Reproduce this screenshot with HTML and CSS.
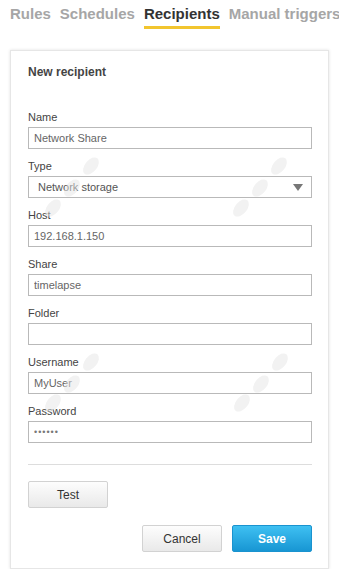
FILE: index.html
```html
<!DOCTYPE html>
<html lang="en">
<head>
    <meta charset="UTF-8">
    <meta name="viewport" content="width=device-width, initial-scale=1.0">
    <title>Recipients</title>
    <link rel="stylesheet" href="styles.css">
</head>
<body>
    <!-- Tabs -->
    <nav class="tabs">
        <a class="tab">Rules</a>
        <a class="tab">Schedules</a>
        <a class="tab active">Recipients</a>
        <a class="tab">Manual triggers</a>
    </nav>

    <div class="card">
        <h2 class="card-title">New recipient</h2>

        <div class="field">
            <label>Name</label>
            <input type="text" value="Network Share">
        </div>
        <div class="field">
            <label>Type</label>
            <div class="select">
                <span>Network storage</span>
                <span class="arrow"></span>
            </div>
        </div>
        <div class="field">
            <label>Host</label>
            <input type="text" value="192.168.1.150">
        </div>
        <div class="field">
            <label>Share</label>
            <input type="text" value="timelapse">
        </div>
        <div class="field">
            <label>Folder</label>
            <input type="text" value="">
        </div>
        <div class="field">
            <label>Username</label>
            <input type="text" value="MyUser">
        </div>
        <div class="field">
            <label>Password</label>
            <input type="password" value="secret">
        </div>

        <hr class="divider">

        <button class="btn">Test</button>

        <div class="actions">
            <button class="btn">Cancel</button>
            <button class="btn btn-blue">Save</button>
        </div>

        <!-- faint watermark blobs over the form -->
        <svg class="watermark" width="319" height="520" viewBox="0 0 319 520">
            <g fill="#e4e4e4" opacity="0.5">
                <ellipse cx="80" cy="115" rx="6" ry="10" transform="rotate(40 80 115)"/>
                <ellipse cx="61" cy="137" rx="6" ry="10" transform="rotate(40 61 137)"/>
                <ellipse cx="42" cy="157" rx="6" ry="10" transform="rotate(40 42 157)"/>
                <ellipse cx="268" cy="115" rx="6" ry="10" transform="rotate(40 268 115)"/>
                <ellipse cx="249" cy="137" rx="6" ry="10" transform="rotate(40 249 137)"/>
                <ellipse cx="230" cy="157" rx="6" ry="10" transform="rotate(40 230 157)"/>
                <ellipse cx="80" cy="311" rx="6" ry="10" transform="rotate(40 80 311)"/>
                <ellipse cx="61" cy="333" rx="6" ry="10" transform="rotate(40 61 333)"/>
                <ellipse cx="42" cy="352" rx="6" ry="10" transform="rotate(40 42 352)"/>
                <ellipse cx="269" cy="311" rx="6" ry="10" transform="rotate(40 269 311)"/>
                <ellipse cx="250" cy="333" rx="6" ry="10" transform="rotate(40 250 333)"/>
                <ellipse cx="231" cy="352" rx="6" ry="10" transform="rotate(40 231 352)"/>
            </g>
        </svg>
    </div>
</body>
</html>
```

FILE: styles.css
```css
body { margin: 0; padding: 0; background: #ffffff; font-family: 'Liberation Sans', Arial, sans-serif; color: #444; overflow: hidden; }

.tabs { display: flex; gap: 9px; padding: 4px 0 0 10px; height: 50px; box-sizing: border-box; white-space: nowrap; overflow: hidden; }
.tab { font-size: 15px; font-weight: bold; color: #a6a6a6; line-height: 20px; height: 22px; cursor: pointer; }
.tab.active { color: #333; border-bottom: 3px solid #f2c52e; }

.card { position: relative; margin: 0 10px; padding: 13px 16px 16px 17px; border: 1px solid #e6e6e6; box-shadow: 0 0 3px rgba(0, 0, 0, 0.12); background: #fff; }
.card-title { margin: 0 0 29px 0; font-size: 12px; font-weight: bold; line-height: 16px; color: #444; }

.field { display: flex; flex-direction: column; margin-bottom: 9px; }
.field label { font-size: 11px; line-height: 16px; margin-bottom: 2px; color: #444; }
.field input { height: 22px; box-sizing: border-box; border: 1px solid #b9b9b9; padding: 0 5px; font-family: 'Liberation Sans', Arial, sans-serif; font-size: 11px; color: #666; outline: none; margin: 0; }
.field input[type="password"] { font-size: 9px; letter-spacing: 1px; color: #777; }

.select { display: flex; align-items: center; justify-content: space-between; height: 22px; box-sizing: border-box; border: 1px solid #b9b9b9; padding: 0 8px 0 9px; font-size: 11px; color: #555; }
.arrow { width: 0; height: 0; border-left: 5px solid transparent; border-right: 5px solid transparent; border-top: 7px solid #777; }

.divider { border: none; border-top: 1px solid #ddd; margin: 21px 0 16px 0; }

.btn { display: block; width: 80px; height: 27px; border: 1px solid #d2d2d2; border-radius: 2px; background: linear-gradient(#fdfdfd, #e9e9e9); font-family: 'Liberation Sans', Arial, sans-serif; font-size: 12px; color: #333; padding: 0; cursor: pointer; }
.btn-blue { border-color: #1a93cf; background: linear-gradient(#3ec0f2, #1896d3); color: #fff; font-weight: bold; }

.actions { display: flex; justify-content: flex-end; gap: 10px; margin-top: 17px; }

.watermark { position: absolute; left: 0; top: 0; pointer-events: none; }
```
